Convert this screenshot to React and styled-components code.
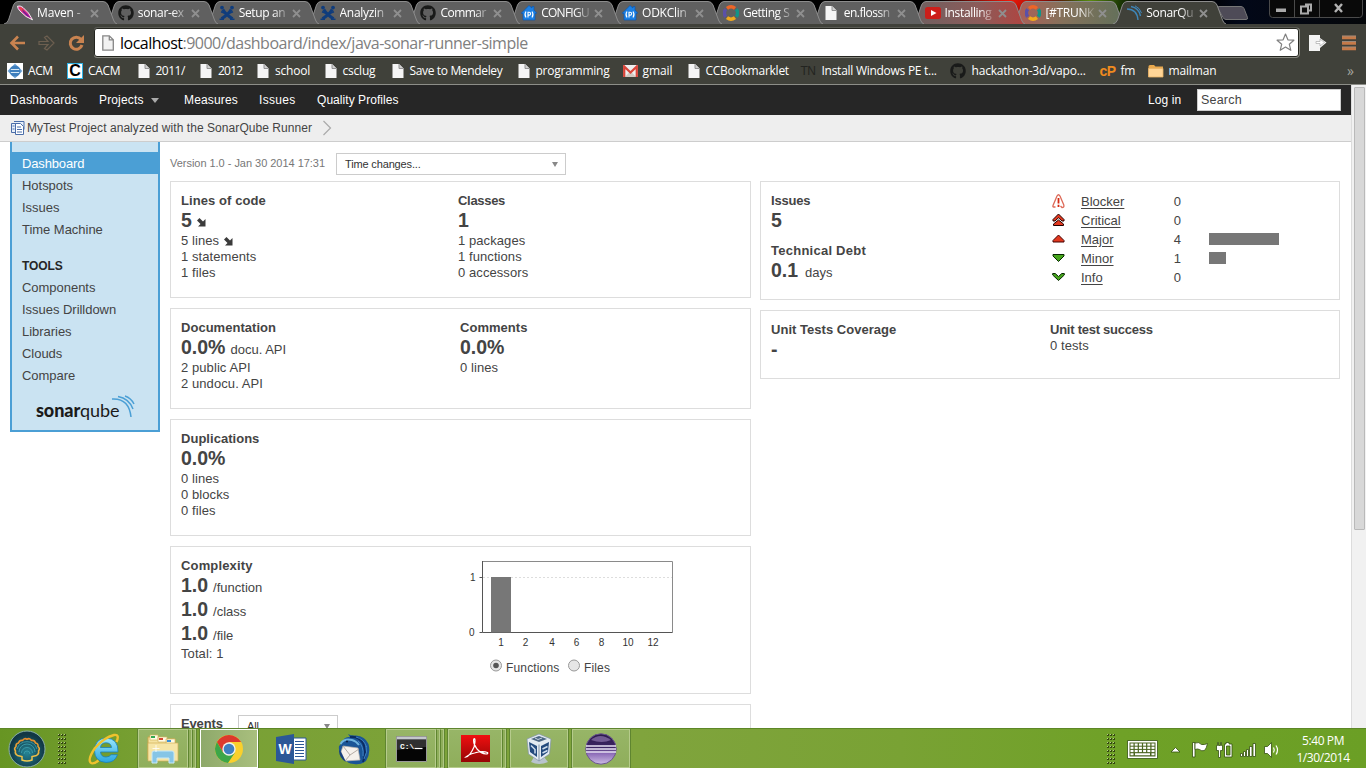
import React from "react";
import styled, { createGlobalStyle, css } from "styled-components";
import { FaGithub } from "react-icons/fa";

const Global = createGlobalStyle`
  * { box-sizing: border-box; }
  body { margin: 0; background: #fff; overflow: hidden; }
  svg { display: block; flex: none; }
`;

const ui = `"Open Sans", "Noto Sans", sans-serif`;
const arial = `"Liberation Sans", Arial, sans-serif`;

const Screen = styled.div`
  width: 1366px;
  height: 768px;
  display: flex;
  flex-direction: column;
  overflow: hidden;
  font-family: ${arial};
  font-size: 13px;
  color: #444;
`;

/* ---------- browser chrome ---------- */

const TabStrip = styled.div`
  height: 24px;
  flex: none;
  display: flex;
  padding-left: 4px;
  background:
    radial-gradient(ellipse 70px 40px at 1010px 0, #f01808 0, #8a0d06 50%, transparent 100%),
    radial-gradient(ellipse 50px 40px at 1090px 0, #5c8a10 0, #1c3a04 60%, transparent 100%),
    linear-gradient(90deg, #000 0 1200px, #020818 1240px, #05070a 1366px);
`;

const Tab = styled.div`
  position: relative;
  z-index: ${(p) => p.$z};
  width: 100.85px;
  height: 24px;
  flex: none;
  display: flex;
  align-items: center;
  padding: 2px 0 0 13px;
  > svg:first-child { position: absolute; left: 0; top: 0; z-index: -1; }
`;

const TabTitle = styled.div`
  width: 52px;
  margin-left: 4px;
  white-space: nowrap;
  font: 12px/18px ${ui};
  letter-spacing: ${(p) => p.$ls || 0}px;
  color: #fff;
  mask-image: linear-gradient(90deg, #000 66%, rgba(0, 0, 0, 0.1) 96%);
`;

const TabClose = styled.svg`
  margin: 1px 0 0 1px;
`;

const NewTab = styled.svg`
  margin: 5px 0 0 3px;
`;

const WindowControls = styled.svg`
  margin-left: auto;
  margin-right: 3px;
`;

const Toolbar = styled.div`
  height: 34px;
  flex: none;
  display: flex;
  align-items: flex-start;
  background: #40413a;
  padding: 4px 0 0 9px;
`;

const NavIcons = styled.div`
  display: flex;
  gap: 11px;
  width: 85px;
  padding-top: 6px;
`;

const Omnibox = styled.div`
  width: 1205px;
  height: 29px;
  display: flex;
  align-items: center;
  background: #fff;
  border: 1px solid #24251f;
  border-radius: 3px;
  box-shadow: 0 1px 0 #85867e, 1px 0 0 #85867e, 0 -1px 0 #5b5c55;
  padding: 0 3px 0 7px;
`;

const Url = styled.div`
  flex: 1;
  margin-left: 6px;
  font: 16px/24px ${ui};
  letter-spacing: -0.51px;
  color: #808080;
  span { color: #000; }
`;

const ToolButtons = styled.div`
  display: flex;
  align-items: center;
  height: 29px;
  padding-left: 9px;
  gap: 15px;
`;

const BookmarkBar = styled.div`
  height: 27px;
  flex: none;
  display: flex;
  align-items: center;
  background: #40413a;
  border-bottom: 1px solid #8d8e88;
  padding: 0 12px 1px 7px;
`;

const Bookmark = styled.div`
  width: ${(p) => p.$w}px;
  flex: none;
  display: flex;
  align-items: center;
  white-space: nowrap;
  font: 500 12px/18px ${ui};
  letter-spacing: ${(p) => p.$ls}px;
  color: #fff;
  span { margin-left: ${(p) => p.$gap || 3}px; }
`;

const BookmarkMore = styled.div`
  margin-left: auto;
  font: 14px/18px ${ui};
  color: #a5a69f;
`;

const TextIcon = styled.div`
  width: 16px;
  font: ${(p) => (p.$bold ? 800 : 400)} ${(p) => p.$size}px/16px ${arial};
  letter-spacing: -0.5px;
  color: ${(p) => p.$color};
`;

const CIcon = styled.div`
  width: 16px;
  height: 16px;
  border: 1px solid #31b4e6;
  background: #fff;
  color: #000;
  text-align: center;
  font: bold 16px/14px "Liberation Sans", sans-serif;
`;

/* ---------- page ---------- */

const Viewport = styled.div`
  height: 643px;
  flex: none;
  display: flex;
  overflow: hidden;
`;

const Page = styled.div`
  width: 1351px;
  height: 643px;
  overflow: hidden;
`;

const ScrollTrack = styled.div`
  width: 15px;
  border-left: 1px solid #dcdcdc;
  background: #f1f1f1;
  padding: 2px 1px 0 2px;
`;

const ScrollThumb = styled.div`
  height: 443px;
  background: #d8d8d8;
  border: 1px solid #b9b9b9;
  border-radius: 1px;
`;

const NavBar = styled.div`
  height: 30px;
  display: flex;
  align-items: center;
  background: #262626;
  padding: 0 10px;
  font-size: 12px;
  color: #fff;
`;

const NavItem = styled.div`
  display: flex;
  align-items: center;
  width: ${(p) => p.$w}px;
  letter-spacing: ${(p) => p.$ls || 0}px;
`;

const Caret = styled.i`
  width: 0;
  height: 0;
  margin-left: ${(p) => p.$gap || 0}px;
  border: ${(p) => p.$s || 4}px solid transparent;
  border-bottom: 0;
  border-top: 5px solid ${(p) => p.$color || "#aaa"};
`;

const Search = styled.div`
  width: 144px;
  height: 22px;
  border: 1px solid #cdcdcd;
  background: #fff;
  color: #444;
  font-size: 12.5px;
  line-height: 21px;
  letter-spacing: 0.2px;
  padding-left: 3px;
`;

const Crumbs = styled.div`
  height: 27px;
  display: flex;
  align-items: center;
  background: #eee;
  border-bottom: 1px solid #cdcdcd;
  padding-left: 10px;
  font-size: 12px;
  svg:last-child { margin-left: 10px; }
`;

const CrumbName = styled.span`
  margin-left: 1px;
  letter-spacing: 0.06px;
`;

const Body = styled.div`
  display: flex;
  padding-left: 10px;
`;

const Sidebar = styled.div`
  width: 150px;
  height: 290px;
  flex: none;
  border: 2px solid #4b9fd5;
  border-top: 0;
  background: #cae3f2;
  padding-top: 10px;
`;

const SideItem = styled.div`
  height: 22px;
  line-height: 23px;
  padding-left: 10px;
  letter-spacing: -0.03px;
  ${(p) => p.$active && css`background: #4b9fd5; color: #fff; letter-spacing: -0.15px;`}
`;

const SideHeading = styled(SideItem)`
  margin-top: 14px;
  font-size: 12px;
  font-weight: bold;
  line-height: 24px;
  letter-spacing: -0.1px;
  color: #262626;
`;

const SideLogo = styled.div`
  position: relative;
  display: flex;
  align-items: baseline;
  margin: 11px 0 0 24px;
  font: 900 18px/26px Lato, sans-serif;
  letter-spacing: -0.1px;
  color: #1b1b1b;
  span { font-weight: 400; letter-spacing: -0.1px; }
  svg { position: absolute; left: 75px; top: -2px; }
`;

const Content = styled.div`
  padding: 11px 0 0 10px;
`;

const VersionRow = styled.div`
  height: 28px;
  display: flex;
  font-size: 11px;
  line-height: 21px;
  color: #777;
`;

const Version = styled.span`
  width: 166px;
  letter-spacing: -0.03px;
`;

const Select = styled.div`
  width: ${(p) => p.$w}px;
  height: 22px;
  margin-top: ${(p) => p.$mt || 0}px;
  display: flex;
  align-items: center;
  justify-content: space-between;
  border: 1px solid #ccc;
  background: #fff;
  color: #333;
  padding: 0 7px 0 8px;
  font-size: 11px;
  letter-spacing: -0.15px;
`;

const Columns = styled.div`
  display: flex;
  gap: 9px;
`;

const Column = styled.div`
  width: ${(p) => p.$w}px;
  display: flex;
  flex-direction: column;
  gap: 10px;
`;

const Box = styled.div`
  height: ${(p) => p.$h}px;
  display: flex;
  border: 1px solid #ddd;
  padding: 11px 10px 0;
`;

const Half = styled.div`
  width: ${(p) => p.$w || 279}px;
  flex: none;
`;

const Title = styled.div`
  height: 16px;
  font-weight: bold;
  line-height: 16px;
  letter-spacing: ${(p) => p.$ls ?? 0.03}px;
`;

const DebtTitle = styled(Title)`
  margin-top: 10px;
`;

const Big = styled.div`
  height: 24px;
  display: flex;
  align-items: baseline;
  gap: ${(p) => p.$gap || 5}px;
  line-height: 23px;
  b { font-size: 19.5px; letter-spacing: 0; }
`;

const Line = styled.div`
  height: 16px;
  display: flex;
  align-items: center;
  gap: 5px;
  line-height: 16px;
  letter-spacing: 0.08px;
`;

const Severities = styled.div`
  padding: 0 0 0 2px;
  margin-top: -1px;
`;

const Severity = styled.div`
  height: 19px;
  display: flex;
  align-items: center;
  svg { margin-right: 16px; }
`;

const SeverityName = styled.span`
  width: 76px;
  text-decoration: underline;
  text-underline-offset: 2px;
`;

const SeverityCount = styled.span`
  width: 24px;
  text-align: right;
`;

const Bar = styled.div`
  height: 12px;
  margin-left: 28px;
  margin-top: -2px;
  background: #777;
`;

const Chart = styled.div`
  padding-top: 1px;
`;

const Radios = styled.div`
  display: flex;
  align-items: center;
  margin: 12px 0 0 26px;
  font-size: 12px;
  svg { margin: -5px 4px 0 0; }
  span { width: 62px; letter-spacing: 0.15px; }
`;

/* ---------- taskbar ---------- */

const Taskbar = styled.div`
  height: 40px;
  flex: none;
  display: flex;
  align-items: stretch;
  border-top: 1px solid #5d8727;
  background: linear-gradient(90deg, #679523 0, #78a033 150px, #80a43d 640px, #79a234 900px, #6fa127 1120px, #6b9f25 1366px);
`;

const TaskSlot = styled.div`
  width: ${(p) => p.$w}px;
  display: flex;
  align-items: center;
  justify-content: center;
`;

const TaskButton = styled.div`
  display: flex;
  width: ${(p) => p.$w}px;
  margin-right: ${(p) => p.$mr || 3}px;
  outline: 1px solid #5f8530;
`;

const TaskFace = styled.div`
  flex: 1;
  display: flex;
  align-items: center;
  justify-content: center;
  border: 1px solid ${(p) => (p.$active ? "#fff" : "#b6cb8c")};
  background: ${(p) => (p.$active ? "linear-gradient(90deg, #8ea96a, #a9bf7e)" : "linear-gradient(#97b567, #8fae5b)")};
`;

const TaskEdge = styled.div`
  width: 4px;
  border: 1px solid #b0c785;
  border-left-color: #5f8530;
  background: #8fae5b;
`;

const Tray = styled.div`
  display: flex;
  align-items: center;
  margin-left: auto;
`;

const Clock = styled.div`
  width: 86px;
  padding-top: 1px;
  text-align: center;
  font: 12px/17px ${ui};
  letter-spacing: -0.4px;
  color: #fff;
`;

/* ---------- icons ---------- */

const PageIcon = ({ big }) => (
  <svg width={big ? 12 : 16} height={big ? 16 : 16} viewBox={big ? "0 0 12 16" : "0 0 16 16"}>
    {big ? (
      <path d="M.8.8h6.5l4 4v10.4H.8z M7.3.8v4h4" fill="#f2f2f2" stroke="#868686" strokeWidth="1.3" />
    ) : (
      <g transform="translate(1.5 1)"><path d="M0 0h6.5L11 4.5V14H0z" fill="#f5f5f5" /><path d="M6.500 0v4.500H11" fill="#d0d0d0" stroke="#8b8b8b" strokeWidth=".9" /></g>
    )}
  </svg>
);

const Feather = () => (
  <svg width="16" height="16" viewBox="0 0 16 16">
    <path d="M.5 1.2Q3 .2 6 2.500L11.500 8 15.500 14.800 9 11.500 3 6Q.6 3.500.5 1.200z" fill="#d62a90" stroke="#fff" strokeWidth=".9" />
    <path d="M2 2Q5 2 7.500 6L9 8 5 6z" fill="#f04a38" /><path d="M5 4l9 9-4-2-4-4z" fill="#6a1a9a" />
  </svg>
);

const Github = () => <FaGithub size={16} color="#191a19" />;

const Confluence = () => (
  <svg width="16" height="16" viewBox="0 0 16 16" fill="none" stroke="#0f3c7c">
    <path d="M3.800 4.500Q6 8.800 13.500 13.800M12.200 4.500Q10 8.800 2.500 13.800" strokeWidth="3" />
    <path d="M.5 14.300h4.500M11 14.300h4.500M2 6.800l4 1.500M14 6.800l-4 1.500" strokeWidth="1.500" />
    <circle cx="3" cy="2.600" r="1.900" fill="#0f3c7c" stroke="none" /><circle cx="13" cy="2.600" r="1.900" fill="#0f3c7c" stroke="none" />
  </svg>
);

const House = () => (
  <svg width="16" height="16" viewBox="0 0 16 16">
    <path d="M8 .5L11 3V1.500h2V5l2.800 3.200-1.800.3V15H2V8.500L.2 8.200z" fill="#1c80e4" stroke="#0b58b0" strokeWidth=".7" />
    <path d="M5 6.500Q3 9.500 5 12.500M11 6.500Q13 9.500 11 12.500M7 12.500V7.300h1.200Q9.600 7.300 9.600 8.700T8.200 10.100H7" fill="none" stroke="#fff" strokeWidth="1.100" />
  </svg>
);

const Ring = () => (
  <svg width="16" height="16" viewBox="0 0 16 16" fill="none" strokeWidth="3.400">
    <path d="M4 3.300Q8 .2 12 3.300" stroke="#ee6527" /><path d="M13.300 4.300Q16 8 13.300 11.700" stroke="#129387" />
    <path d="M12 12.700Q8 15.800 4 12.700" stroke="#f2a91c" /><path d="M2.700 11.700Q0 8 2.700 4.300" stroke="#5a50a8" />
  </svg>
);

const YouTube = () => (
  <svg width="16" height="16" viewBox="0 0 16 16"><rect x="0" y="2" width="16" height="12" rx="2.500" fill="#cc1e1a" /><path d="M6 5l5.500 3L6 11z" fill="#fff" /></svg>
);

const Waves = ({ color = "#3e86b8" }) => (
  <svg width="16" height="16" viewBox="0 0 16 16" fill="none" stroke={color} strokeWidth="1.400">
    <path d="M1 4Q11 4 12 15" /><path d="M5 1.500Q13 3 14.500 11" /><path d="M9 .8Q14 3 15.500 8" strokeWidth="1" />
  </svg>
);

const Acm = () => (
  <svg width="16" height="16" viewBox="0 0 16 16"><path d="M0 0h16v16H0z" fill="#fff" /><path d="M8 .5L15.500 8 8 15.500.5 8z" fill="#78aad8" /><circle cx="8" cy="8" r="5.500" fill="#3e7fbd" /><path d="M3.800 6.500h8.400M3.800 9.500h8.400" stroke="#d5e8f5" strokeWidth="1.200" /></svg>
);

const Gmail = () => (
  <svg width="15" height="12" viewBox="0 0 15 12"><path d="M0 0h15v12H0z" fill="#eee" /><path d="M2 12l5.500-6 5.500 6z" fill="#d2c9c2" /><path d="M1.200 12V1.500l6.300 6 6.300-6V12" fill="none" stroke="#d9453a" strokeWidth="2.300" /></svg>
);

const Folder = () => (
  <svg width="16" height="14" viewBox="0 0 16 14"><path d="M.5 2.500Q.5 1 2 1h4l1.500 1.500H15V13H.5z" fill="#e9a94e" /><path d="M.5 4.500H15V13H.5z" fill="#ffd596" stroke="#e9b366" strokeWidth=".8" /></svg>
);

const tabs = [
  ["Maven -", <Feather />, -0.15],
  ["sonar-ex", <Github />, -0.35],
  ["Setup an", <Confluence />, -0.35],
  ["Analyzin", <Confluence />, -0.3],
  ["Commar", <Github />, -0.5],
  ["CONFIGU", <House />, -0.75],
  ["ODKClin", <House />, -0.25],
  ["Getting S", <Ring />, -0.45],
  ["en.flossn", <PageIcon />, -0.5],
  ["Installing", <YouTube />, -0.35],
  ["[#TRUNK", <Ring />, -0.3],
  ["SonarQu", <Waves />, -0.35],
];

const TabShape = ({ index }) => {
  const fill = index === 11 ? "#40413a" : index === 10 ? "url(#tabGreen)" : index === 9 ? "url(#tabRed)" : "#606060";
  return (
    <svg width="116" height="24" viewBox="0 0 116 24">
      <defs>
        <linearGradient id="tabRed"><stop offset="0" stopColor="#6e6060" /><stop offset=".6" stopColor="#8c5b59" /><stop offset="1" stopColor="#b04440" /></linearGradient>
        <linearGradient id="tabGreen"><stop offset="0" stopColor="#b05d57" /><stop offset=".45" stopColor="#85715b" /><stop offset="1" stopColor="#61705a" /></linearGradient>
      </defs>
      <path d="M0 24Q3 23.500 4.500 20L9.500 5Q11 1.500 14 1.500H99Q102.500 1.500 104 5L109.500 20Q110.700 23.500 113 24" fill={fill} stroke="#8c8c8c" />
    </svg>
  );
};

const bookmarks = [
  ["ACM", <Acm />, 60, -0.45, 5],
  ["CACM", <CIcon>C</CIcon>, 69.5, -0.3, 5],
  ["2011/", <PageIcon />, 62.5, -0.5, 3],
  ["2012", <PageIcon />, 57, -0.75, 3],
  ["school", <PageIcon />, 67.5, -0.2, 3],
  ["csclug", <PageIcon />, 67, -0.2, 3],
  ["Save to Mendeley", <PageIcon />, 126, -0.35, 3],
  ["programming", <PageIcon />, 106, -0.25, 3],
  ["gmail", <Gmail />, 64, -0.1, 5],
  ["CCBookmarklet", <PageIcon />, 114, -0.25, 3],
  ["Install Windows PE t...", <TextIcon $size={12} $color="#232420">TN</TextIcon>, 149, -0.27, 5],
  ["hackathon-3d/vapo...", <Github />, 150, -0.2, 6],
  ["fm", <TextIcon $size={14} $bold $color="#f08b1e">cP</TextIcon>, 48, -0.2, 5],
  ["mailman", <Folder />, 80, -0.15, 5],
];

const TrendDown = () => (
  <svg width="9" height="9" viewBox="0 0 9 9"><path d="M1.500 1l1-1 3.500 3.500L8.500 1V8.500H1L3.500 6 0 2.500z" fill="#3b3b3b" /></svg>
);

const SeverityIcon = ({ kind }) => (
  <svg width="13" height="15" viewBox="0 0 13 15" strokeWidth="1">
    {kind === "Blocker" && (
      <g fill="none" stroke="#dd6a58" strokeWidth="1.300"><path d="M3.500 13H1.800Q.5 13 1 11.500L5 2Q6.500-.5 8 2l3.800 9Q12.500 13.500 10 13.500l-1.500-1.500" /><path d="M6.500 4v5.500M6.500 10.800v2.200" stroke="#d42a12" strokeWidth="1.800" /></g>
    )}
    {kind === "Critical" && (
      <g fill="#e2381e" stroke="#200"><path d="M6.500 1L12 6.500v1.500h-2L6.500 4.800 3 8H1V6.500z" /><path d="M6.500 7L11.500 11v1.500H1.500V11z" /></g>
    )}
    {kind === "Major" && <path d="M6.500 3L12 8.500v1.500H1V8.500z" fill="#e2381e" stroke="#400" />}
    {kind === "Minor" && <path d="M1 3.500h11V5L6.500 10.500 1 5z" fill="#46a51c" stroke="#062800" />}
    {kind === "Info" && <path d="M.7 3.500h2.500l3.300 3 3.300-3h2.500V5L6.500 10.500.7 5z" fill="#46a51c" stroke="#062800" />}
  </svg>
);

const ComplexityChart = () => (
  <svg width="210" height="90" viewBox="464 559 210 90" fontFamily="Liberation Sans" fontSize="10" fill="#333">
    <path d="M483 577.500h189" stroke="#ddd" strokeDasharray="2 2" />
    <path d="M482.500 561.500h190v71" fill="none" stroke="#8a8a8a" />
    <path d="M482.500 561v71.500h190M479.500 577.500h3M479.500 632.500h3" fill="none" stroke="#555" />
    <path d="M491 577h20v55.500h-20z" fill="#777" />
    <text x="470" y="581">1</text><text x="469" y="636">0</text>
    {[["1", 501], ["2", 525.5], ["4", 552], ["6", 576.5], ["8", 601.5], ["10", 628], ["12", 653]].map(([t, x]) => (
      <text key={t} x={x} y="646" textAnchor="middle">{t}</text>
    ))}
  </svg>
);

const Radio = ({ on }) => (
  <svg width="12" height="13" viewBox="0 0 12 13"><circle cx="6" cy="6.500" r="5.500" fill="#e6e6e6" stroke="#999" />{on && <circle cx="6" cy="6.500" r="2.800" fill="#555" />}</svg>
);

const Grip = () => (
  <svg width="9" height="32" viewBox="0 0 9 32">
    {[0, 1, 2, 3, 4, 5, 6, 7].map((r) => [0, 1, 2].map((c) => (
      <g key={`${r}-${c}`}><rect x={c * 3} y={r * 4 + 1} width="2" height="2" fill="#33470f" /><rect x={c * 3} y={r * 4 + 1} width="1" height="1" fill="#b8cf8c" /></g>
    )))}
  </svg>
);

const Shell = () => (
  <svg width="38" height="38" viewBox="0 0 38 38">
    <defs>
      <radialGradient id="orb" cy=".6"><stop offset="0" stopColor="#268596" /><stop offset=".65" stopColor="#17515f" /><stop offset="1" stopColor="#123744" /></radialGradient>
      <linearGradient id="shellLine" x2="0" y2="1"><stop offset="0" stopColor="#e58a2a" /><stop offset="1" stopColor="#efcb4e" /></linearGradient>
    </defs>
    <circle cx="19" cy="19" r="18" fill="url(#orb)" stroke="#8ab0a8" />
    <g fill="none" stroke="#3b9daa" strokeWidth=".9">
      <path d="M11 22a8 8 0 0 1 16 0M13.500 23a5.500 5.500 0 0 1 11 0M16 24a3 3 0 0 1 6 0M9 19a10.500 10.500 0 0 1 20 0" />
    </g>
    <path d="M14 30V26.500L9.500 25.500Q6.500 23.500 7.500 21 5.500 18.500 8 16.500 7.500 13.500 10.500 13 11.500 9.800 14.500 10.500 16.500 7.500 19 9.300 21.500 7.500 23.500 10.500 26.500 9.800 27.500 13 30.500 13.500 30 16.500 32.500 18.500 30.500 21 31.500 23.500 28.500 25.500L24 26.500V30Q19 32 14 30z" fill="none" stroke="url(#shellLine)" strokeWidth="1.500" />
  </svg>
);

const IE = () => (
  <svg width="32" height="32" viewBox="0 0 32 32">
    <defs><linearGradient id="ie" x2="0" y2="1"><stop offset="0" stopColor="#9be8fc" /><stop offset="1" stopColor="#29a5e0" /></linearGradient></defs>
    <path d="M30 19H12.500q.5 5 5.500 5 3.500 0 5-2.300h6.500Q27 29.500 18 29.500 6.500 28.500 6.500 17.500 7 5.500 18 5 30.500 5.500 30 19zM12.500 14.500h11Q23 9.800 18 9.800 13 9.800 12.500 14.500z" fill="url(#ie)" stroke="#1b7fb8" strokeWidth=".8" />
    <path d="M28.500 9Q32 1 26 2 16 4.500 7 15-.5 26 2.500 29.500 5 32 10.500 27.500" fill="none" stroke="#efc22d" strokeWidth="2.400" />
  </svg>
);

const Explorer = () => (
  <svg width="32" height="32" viewBox="0 0 32 32">
    <path d="M1 4h11l2 2h14v20H1z" fill="#f5e3a0" stroke="#c9a64c" /><path d="M3 2h8v5H3zM11 4h9v5h-9zM19 6h9v5h-9z" fill="#fffbe4" stroke="#d6b765" strokeWidth=".7" />
    <path d="M4 3h4v2H4z" fill="#32a852" /><path d="M12 5h4v2h-4z" fill="#d64a34" /><path d="M20 7h4v2h-4z" fill="#3a8fd6" />
    <path d="M1 10h30v18H1z" fill="#f6e5a6" stroke="#d2b058" strokeWidth=".7" />
    <path d="M5 30V20q0-2 2-2h18q2 0 2 2v10h-5v-5H10v5z" fill="#86c5e6" stroke="#c8e9f8" />
    <path d="M9 12v7M5.500 15.500h7" stroke="#fff" strokeWidth=".8" />
  </svg>
);

const Chrome = () => (
  <svg width="30" height="30" viewBox="0 0 30 30">
    <circle cx="15" cy="15" r="14" fill="#fad02c" />
    <path d="M2.900 8A14 14 0 0 1 27.100 8H15L9 18.500z" fill="#dc3a2d" /><path d="M2.900 8A14 14 0 0 0 14 29l7-10.500H9z" fill="#3da648" />
    <circle cx="15" cy="15" r="6.700" fill="#f1f1ea" /><circle cx="15" cy="15" r="5.300" fill="#3f7fc0" />
  </svg>
);

const Word = () => (
  <svg width="31" height="32" viewBox="0 0 31 32"><path d="M17 5h13v22H17z" fill="#fff" stroke="#2b5797" /><path d="M19 8.500h9M19 11.500h9M19 14.500h9M19 17.500h9M19 20.500h9M19 23.500h9" stroke="#2b5797" /><path d="M0 4l18-3v30L0 28z" fill="#2b5797" /><text x="9" y="21" fontSize="14" fontWeight="bold" textAnchor="middle" fill="#fff" fontFamily="Liberation Sans">W</text></svg>
);

const Thunderbird = () => (
  <svg width="32" height="32" viewBox="0 0 32 32">
    <path d="M10 1q3 2 8 1.500Q27 3 30.500 11 33 20 28 28q-5 4-12 3-6 0-10-5Q0 20 1 13l3-3Q6 3 12 4z" fill="#1a5597" />
    <path d="M12 4Q21 3 25 10q4 9 0 19" fill="none" stroke="#0c2c62" strokeWidth="2" />
    <path d="M18 4q8 2 10.500 10M20 8q6 5 5 15M28 13q2 6-2 13" stroke="#3f82c4" strokeWidth="1" fill="none" />
    <path d="M2.500 11Q6 5 14 7q4 1 7 5" stroke="#6fb3df" strokeWidth="2" fill="none" />
    <path d="M5 13l15 2 2 12-15 1-4-9z" fill="#f5f1ec" stroke="#b9b3ac" strokeWidth=".7" />
    <path d="M5 13l7 9 9-6M12 22L7 28" fill="none" stroke="#aaa39c" strokeWidth=".9" />
    <path d="M1 17q0 8 7 12l-2-4-3-6z" fill="#173f7e" /><circle cx="9" cy="8.500" r="1" fill="#0b1d3c" />
  </svg>
);

const Cmd = () => (
  <svg width="31" height="26" viewBox="0 0 31 26"><path d="M.5.5h30v25H.5z" fill="#050505" stroke="#999" /><path d="M1 1h29v2.500H1z" fill="#c3c7cc" /><path d="M1 4h29v7L1 14z" fill="#303030" /><text x="4" y="13" fontFamily="Liberation Mono" fontSize="8" fontWeight="bold" fill="#fff">C:\</text><path d="M18.500 12.500h8" stroke="#fff" strokeWidth="1.200" /></svg>
);

const Acrobat = () => (
  <svg width="29" height="27" viewBox="0 0 29 27"><defs><linearGradient id="pdf" x2="0" y2="1"><stop offset="0" stopColor="#f01010" /><stop offset="1" stopColor="#960505" /></linearGradient></defs><path d="M0 0h29v27H0z" fill="url(#pdf)" /><path d="M5 22Q9 21 13 12q1.500-6 .8-8-1.200-1-1.200 1.500 0 4 3.400 8.500Q20 18.500 25 19q2.500-.3 1.500-1.500-5-2-13 .5-6 1.500-8.500 4z" fill="none" stroke="#fff" strokeWidth="1.200" /></svg>
);

const VBox = () => (
  <svg width="28" height="32" viewBox="0 0 28 32"><path d="M9 24h10l4 5q-9 4-17 0z" fill="#b9c4ce" /><path d="M14 1l12 5-1.500 15L14 28 3.500 21 2 6z" fill="#e3eaf1" stroke="#8092a6" strokeWidth=".7" /><path d="M14 11.500V28" stroke="#8092a6" /><path d="M6 6l8-3 8 3-8 3z" fill="#4d6784" /><path d="M10 5l3 1.500 4-1.500" stroke="#c6d3e0" fill="none" /><path d="M4 9l8 4v11l-7-5zM24 9l-8 4v11l7-5z" fill="#234a7d" /><path d="M6 12.500l4 4 0 4M17.500 16l5-2.500M17.500 20l5-2.500" stroke="#cfdded" strokeWidth="1.500" fill="none" /></svg>
);

const Eclipse = () => (
  <svg width="32" height="32" viewBox="0 0 32 32"><defs><linearGradient id="ecl" x2="0" y2="1"><stop offset="0" stopColor="#2c1a4d" /><stop offset=".45" stopColor="#3c2563" /><stop offset=".65" stopColor="#8d6cb8" /><stop offset="1" stopColor="#cdbde5" /></linearGradient></defs><circle cx="16" cy="16" r="15.200" fill="url(#ecl)" stroke="#6b5590" /><path d="M6 7q9-8 20 0-9 4-20 0z" fill="#9c84bd" opacity=".6" /><path d="M1 13h30M1 16h30M1 19h30" stroke="#e8e1f3" strokeWidth="1.300" /></svg>
);

const TrayIcons = () => (
  <svg width="153" height="24" viewBox="1127 736 153 24" fill="#fff" stroke="#33500f" strokeWidth=".8">
    <path d="M1127.500 739.500h30v18h-30z" /><path d="M1129.500 741.500h26v14h-26z" fill="#4a6420" stroke="none" />
    <g stroke="none">{[0, 1, 2].map((r) => [0, 1, 2, 3, 4, 5].map((c) => <rect key={`${r}${c}`} x={1130.5 + c * 4.2} y={742.5 + r * 3.2} width="3" height="2.200" />))}<path d="M1130.500 752.300h3v2h-3zM1135 752.300h15v2h-15zM1151.500 752.300h3v2h-3z" /></g>
    <path d="M1171 751l4.500-4.500 4.500 4.500z" />
    <path d="M1192.500 741.500h2.500v14.500h-2.500z" /><path d="M1195 742q4-1.500 6.500 1.500 3 .5 6-1-1 5-3 7-3 1-5-1-2-1-4.500 0z" />
    <path d="M1217.500 741.500v3h-1v5h2v7h2v-7h2v-5h-1v-3h-1v3h-2v-3z" /><path d="M1226 741.500h3v1.500h3v13h-7.500V743h1.500z" /><path d="M1226.500 745h3.500v9h-3.500z" fill="#6fa127" />
    <path d="M1240.500 752.500h2v3h-2zM1243.500 750.500h2v5h-2zM1246.500 748.500h2v7h-2zM1249.500 745.500h2.500v10h-2.500zM1253 742.500h2.500v13h-2.500z" />
    <path d="M1264.500 745.500h3l4-4v15l-4-4h-3z" /><path d="M1273.500 746.500q1.500 2.500 0 5M1276 744.500q3 4.500 0 9" fill="none" stroke="#fff" strokeWidth="1.200" />
  </svg>
);

const severities = [["Blocker", 0, 0], ["Critical", 0, 0], ["Major", 4, 70], ["Minor", 1, 17], ["Info", 0, 0]];

function BrowserChrome() {
  return (
    <>
      <TabStrip>
        {tabs.map(([title, icon, ls], i) => (
          <Tab key={title} $z={i === 11 ? 30 : 20 - i}>
            <TabShape index={i} />
            {icon}
            <TabTitle $ls={ls}>{title}</TabTitle>
            <TabClose width="9" height="9" viewBox="0 0 9 9"><path d="M1 1l7 7M8 1L1 8" stroke="#8f8f8f" strokeWidth="1.800" /></TabClose>
          </Tab>
        ))}
        <NewTab width="32" height="16" viewBox="0 0 32 16"><path d="M2 1.500h22q2 0 3 2l3.500 9q.5 2-1.500 2H9q-2 0-3-2l-5-9q-.7-2 1-2z" fill="#4e4b57" stroke="#777" /></NewTab>
        <WindowControls width="94" height="19" viewBox="0 0 94 19">
          <path d="M.5 0v14q0 3.500 3 3.500h87q3 0 3-3.500V0M25.500 0v17M50.500 0v17" fill="#090909" stroke="#4a4a4a" />
          <path d="M7 8.500h10v3.500H7z" fill="#aaa" /><path d="M36 4.500h6v6h-2M32 6.500h7v7h-7z" fill="none" stroke="#aaa" strokeWidth="2" /><path d="M66 4l7 8M73 4l-7 8" stroke="#b2b2b2" strokeWidth="2.400" />
        </WindowControls>
      </TabStrip>
      <Toolbar>
        <NavIcons>
          <svg width="18" height="18" viewBox="0 0 18 18" fill="none" stroke="#c98350" strokeWidth="2.600"><path d="M16 9H3M9 2.500L2.500 9 9 15.500" /></svg>
          <svg width="18" height="18" viewBox="0 0 18 18" fill="none" stroke="#6d5f50" strokeWidth="1.200"><path d="M1 7.500h9L6.500 3.500 9 2l7 7-7 7-2.500-1.500 3.500-4H1z" /></svg>
          <svg width="18" height="18" viewBox="0 0 18 18" fill="none" stroke="#c98350" strokeWidth="3"><path d="M14 5.500A6 6 0 1 0 15 11" /><path d="M17 1v8H9z" fill="#c98350" stroke="none" /></svg>
        </NavIcons>
        <Omnibox>
          <PageIcon big />
          <Url><span>localhost</span>:9000/dashboard/index/java-sonar-runner-simple</Url>
          <svg width="19" height="19" viewBox="0 0 19 19"><path d="M9.500 1l2.400 5.800 6 .4-4.600 4 1.500 6.100-5.300-3.300-5.300 3.300 1.500-6.100-4.600-4 6-.4z" fill="#fff" stroke="#808080" strokeWidth="1.200" strokeLinejoin="round" /></svg>
        </Omnibox>
        <ToolButtons>
          <svg width="19" height="18" viewBox="0 0 19 18"><path d="M1 1h11v3l6.500 4.500L12 14v3H1z" fill="#f3f3f3" /><path d="M8 7.500h4V5l4.500 3.500L12 12V9.500H8z" fill="#fff" stroke="#aaa" strokeWidth=".7" /></svg>
          <svg width="14" height="16" viewBox="0 0 14 16"><path d="M0 2.500h14M0 8h14M0 13.500h14" stroke="#c57a49" strokeWidth="3.300" /><path d="M0 1h14M0 6.500h14M0 12h14" stroke="#9b9088" strokeWidth=".8" /></svg>
        </ToolButtons>
      </Toolbar>
      <BookmarkBar>
        {bookmarks.map(([name, icon, w, ls, gap]) => (
          <Bookmark key={name} $w={w} $ls={ls} $gap={gap}>{icon}<span>{name}</span></Bookmark>
        ))}
        <BookmarkMore>»</BookmarkMore>
      </BookmarkBar>
    </>
  );
}

function SonarPage() {
  return (
    <Page>
      <NavBar>
        <NavItem $w={89} $ls={0.3}>Dashboards</NavItem>
        <NavItem $w={85} $ls={0.15}>Projects<Caret $gap={7} /></NavItem>
        <NavItem $w={75} $ls={0.15}>Measures</NavItem>
        <NavItem $w={58} $ls={0.3}>Issues</NavItem>
        <NavItem $w={831} $ls={0.05}>Quality Profiles</NavItem>
        <NavItem $w={49} $ls={0.1}>Log in</NavItem>
        <Search>Search</Search>
      </NavBar>
      <Crumbs>
        <svg width="16" height="16" viewBox="0 0 16 16"><path d="M1.500 3.500h6v9h-6zM4 1.500h10v8" fill="#e7effa" stroke="#4b6ea9" /><path d="M5.500 3.500h5l3 3v8h-8z" fill="#fff" stroke="#4b6ea9" /><path d="M7 7h4M7 9.500h5M7 12h5M2.500 6h2M2.500 9h2" stroke="#4b6ea9" /></svg>
        <CrumbName>MyTest Project analyzed with the SonarQube Runner</CrumbName>
        <svg width="10" height="16" viewBox="0 0 10 16"><path d="M1.500 1l7 7-7 7" fill="none" stroke="#aaa" strokeWidth="1.200" /></svg>
      </Crumbs>
      <Body>
        <Sidebar>
          <SideItem $active>Dashboard</SideItem>
          <SideItem>Hotspots</SideItem>
          <SideItem>Issues</SideItem>
          <SideItem>Time Machine</SideItem>
          <SideHeading>TOOLS</SideHeading>
          <SideItem>Components</SideItem>
          <SideItem>Issues Drilldown</SideItem>
          <SideItem>Libraries</SideItem>
          <SideItem>Clouds</SideItem>
          <SideItem>Compare</SideItem>
          <SideLogo>
            sonar<span>qube</span>
            <svg width="24" height="24" viewBox="0 0 24 24" fill="none" stroke="#4b9fd5" strokeWidth="1.500"><path d="M1 4Q18 3 20 22" /><path d="M7 1.500Q18 3.500 22 14" /><path d="M14 1Q20 3 23 9" /></svg>
          </SideLogo>
        </Sidebar>
        <Content>
          <VersionRow>
            <Version>Version 1.0 - Jan 30 2014 17:31</Version>
            <Select $w={230}>Time changes...<Caret $s={3} $color="#888" /></Select>
          </VersionRow>
          <Columns>
            <Column $w={581}>
              <Box $h={117}>
                <Half $w={277}>
                  <Title $ls={0.08}>Lines of code</Title>
                  <Big><b>5</b><TrendDown /></Big>
                  <Line>5 lines <TrendDown /></Line><Line>1 statements</Line><Line>1 files</Line>
                </Half>
                <Half>
                  <Title $ls={-0.3}>Classes</Title>
                  <Big><b>1</b></Big>
                  <Line>1 packages</Line><Line>1 functions</Line><Line>0 accessors</Line>
                </Half>
              </Box>
              <Box $h={101}>
                <Half>
                  <Title>Documentation</Title>
                  <Big><b>0.0%</b>docu. API</Big>
                  <Line>2 public API</Line><Line>2 undocu. API</Line>
                </Half>
                <Half>
                  <Title>Comments</Title>
                  <Big><b>0.0%</b></Big>
                  <Line>0 lines</Line>
                </Half>
              </Box>
              <Box $h={117}>
                <Half>
                  <Title>Duplications</Title>
                  <Big><b>0.0%</b></Big>
                  <Line>0 lines</Line><Line>0 blocks</Line><Line>0 files</Line>
                </Half>
              </Box>
              <Box $h={148}>
                <Half $w={283}>
                  <Title $ls={0.15}>Complexity</Title>
                  <Big><b>1.0</b>/function</Big>
                  <Big><b>1.0</b>/class</Big>
                  <Big><b>1.0</b>/file</Big>
                  <Line>Total: 1</Line>
                </Half>
                <Chart>
                  <ComplexityChart />
                  <Radios>
                    <Radio on /><span>Functions</span><Radio /><span>Files</span>
                  </Radios>
                </Chart>
              </Box>
              <Box $h={100}>
                <Half $w={57}><Title $ls={-0.15}>Events</Title></Half>
                <Select $w={100} $mt={-1}>All<Caret $s={3} $color="#888" /></Select>
              </Box>
            </Column>
            <Column $w={580}>
              <Box $h={119}>
                <Half>
                  <Title $ls={-0.2}>Issues</Title>
                  <Big><b>5</b></Big>
                  <DebtTitle $ls={0.25}>Technical Debt</DebtTitle>
                  <Big $gap={7}><b>0.1</b>days</Big>
                </Half>
                <Severities>
                  {severities.map(([name, count, w]) => (
                    <Severity key={name}>
                      <SeverityIcon kind={name} />
                      <SeverityName>{name}</SeverityName>
                      <SeverityCount>{count}</SeverityCount>
                      {w > 0 && <Bar style={{ width: w }} />}
                    </Severity>
                  ))}
                </Severities>
              </Box>
              <Box $h={69}>
                <Half>
                  <Title>Unit Tests Coverage</Title>
                  <Big><b>-</b></Big>
                </Half>
                <Half>
                  <Title $ls={-0.25}>Unit test success</Title>
                  <Line>0 tests</Line>
                </Half>
              </Box>
            </Column>
          </Columns>
        </Content>
      </Body>
    </Page>
  );
}

function TaskBar() {
  return (
    <Taskbar>
      <TaskSlot $w={54}><Shell /></TaskSlot>
      <TaskSlot $w={16}><Grip /></TaskSlot>
      <TaskSlot $w={68}><IE /></TaskSlot>
      <TaskButton $w={58} $mr={4}><TaskFace><Explorer /></TaskFace><TaskEdge /><TaskEdge /></TaskButton>
      <TaskButton $w={58} $mr={3}><TaskFace $active><Chrome /></TaskFace></TaskButton>
      <TaskSlot $w={60}><Word /></TaskSlot>
      <TaskSlot $w={65}><Thunderbird /></TaskSlot>
      <TaskButton $w={58} $mr={4}><TaskFace><Cmd /></TaskFace><TaskEdge /><TaskEdge /></TaskButton>
      <TaskButton $w={58} $mr={4}><TaskFace><Acrobat /></TaskFace><TaskEdge /></TaskButton>
      <TaskButton $w={58} $mr={4}><TaskFace><VBox /></TaskFace></TaskButton>
      <TaskButton $w={58}><TaskFace><Eclipse /></TaskFace></TaskButton>
      <Tray>
        <TaskSlot $w={32}><Grip /></TaskSlot>
        <TaskSlot $w={153}><TrayIcons /></TaskSlot>
        <Clock>5:40 PM<br />1/30/2014</Clock>
      </Tray>
    </Taskbar>
  );
}

export default function App() {
  return (
    <Screen>
      <Global />
      <BrowserChrome />
      <Viewport>
        <SonarPage />
        <ScrollTrack><ScrollThumb /></ScrollTrack>
      </Viewport>
      <TaskBar />
    </Screen>
  );
}
